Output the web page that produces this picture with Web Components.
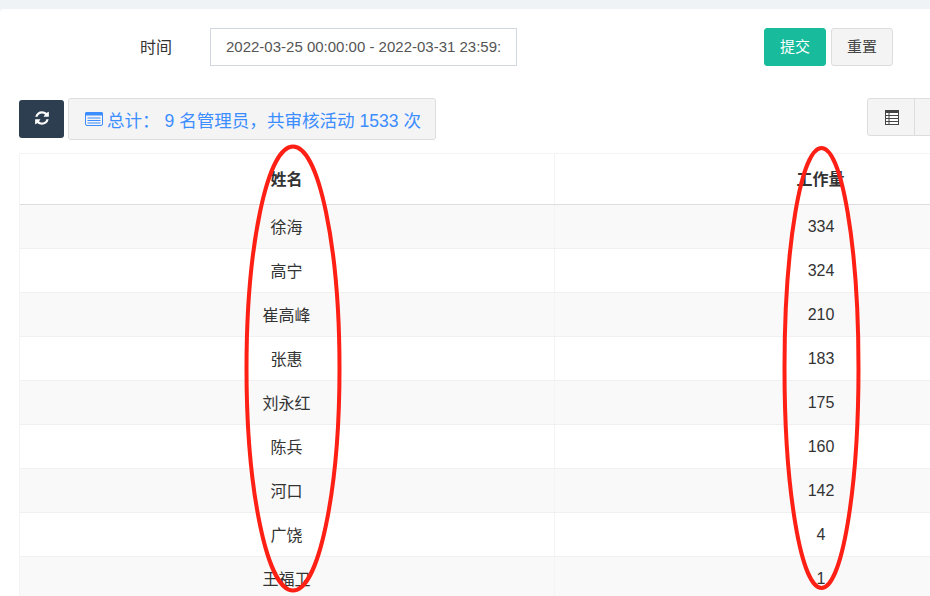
<!DOCTYPE html>
<html lang="zh">
<head>
<meta charset="utf-8">
<title>工作量统计</title>
<style>
    html, body {
        margin: 0;
        height: 596px;
        overflow: hidden;
        background: #f0f3f6;
    }
</style>
</head>
<body>
<admin-page>
    <filter-bar label="时间" value="2022-03-25 00:00:00 - 2022-03-31 23:59:"></filter-bar>
    <table-toolbar summary="总计： 9 名管理员，共审核活动 1533 次"></table-toolbar>
    <stat-table></stat-table>
    <ink-marks></ink-marks>
</admin-page>

<script>
const FONT = '"Liberation Sans", "Noto Sans CJK SC", sans-serif';

class AdminPage extends HTMLElement {
    constructor() {
        super();
        this.shadowDOM = this.attachShadow({ mode: "open" });
        this.shadowDOM.innerHTML = `
            <style>
                :host {
                    display: block;
                    height: 596px;
                    padding-top: 9px;
                    box-sizing: border-box;
                    overflow: hidden;
                    font-family: ${FONT};
                    font-size: 16px;
                    color: #333;
                }

                .panel {
                    position: relative;
                    width: 1108px;
                    height: 587px;
                    padding: 19px 19px 0;
                    box-sizing: border-box;
                    background-color: white;
                    border-radius: 4px 0 0 0;
                }
            </style>

            <div class="panel"><slot></slot></div>
        `;
    }
}

class FilterBar extends HTMLElement {
    constructor() {
        super();
        this.shadowDOM = this.attachShadow({ mode: "open" });
    }

    connectedCallback() {
        this.shadowDOM.innerHTML = `
            <style>
                :host {
                    display: flex;
                    align-items: center;
                    width: 874px;
                    height: 38px;
                }

                .label {
                    width: 191px;
                    padding-right: 38px;
                    padding-bottom: 2px;
                    box-sizing: border-box;
                    text-align: right;
                }

                .input {
                    display: flex;
                    align-items: center;
                    width: 307px;
                    height: 38px;
                    padding: 0 0 2px 15px;
                    box-sizing: border-box;
                    border: 1px solid #d2d6de;
                    font-size: 15px;
                    color: #555;
                    white-space: nowrap;
                }

                .actions {
                    display: flex;
                    gap: 5px;
                    margin-left: auto;
                }

                button {
                    width: 62px;
                    height: 38px;
                    padding: 0 0 3px;
                    border: 1px solid #ddd;
                    border-radius: 3px;
                    background-color: #f4f4f4;
                    font: inherit;
                    font-size: 15px;
                    color: #444;
                }

                button.primary {
                    border-color: #18bc9c;
                    background-color: #18bc9c;
                    color: white;
                }
            </style>

            <div class="label">${this.getAttribute("label")}</div>
            <div class="input">${this.getAttribute("value")}</div>
            <div class="actions">
                <button class="primary">提交</button>
                <button>重置</button>
            </div>
        `;
    }
}

class TableToolbar extends HTMLElement {
    constructor() {
        super();
        this.shadowDOM = this.attachShadow({ mode: "open" });
    }

    connectedCallback() {
        this.shadowDOM.innerHTML = `
            <style>
                :host {
                    display: flex;
                    align-items: flex-start;
                    width: 1069px;
                    height: 42px;
                    margin-top: 32px;
                    margin-bottom: 13px;
                }

                .refresh {
                    display: flex;
                    justify-content: center;
                    align-items: center;
                    width: 45px;
                    height: 38px;
                    margin-top: 2px;
                    padding-bottom: 2px;
                    box-sizing: border-box;
                    border-radius: 3px;
                    background-color: #2c3e50;
                }

                .summary {
                    display: flex;
                    align-items: center;
                    gap: 4px;
                    height: 42px;
                    margin-left: 4px;
                    padding: 0 14px 0 16px;
                    box-sizing: border-box;
                    border: 1px solid #ddd;
                    border-radius: 3px;
                    background-color: #f4f4f4;
                    font-size: 17.56px;
                    color: #3c8dff;
                    white-space: nowrap;
                }

                .tools {
                    display: flex;
                    width: 221px;
                    height: 38px;
                    margin-left: auto;
                    box-sizing: border-box;
                    border: 1px solid #ddd;
                    border-radius: 3px;
                    background-color: #f4f4f4;
                }

                .tools div {
                    display: flex;
                    justify-content: center;
                    align-items: center;
                    width: 47px;
                    padding-left: 1px;
                    box-sizing: border-box;
                    border-right: 1px solid #ddd;
                }
            </style>

            <div class="refresh">
                <svg width="16" height="16" viewBox="0 0 1792 1792" fill="white">
                    <path d="M1639 1056q0 5-1 7-64 268-268 434.5t-478 166.5q-146 0-282.500-55t-243.500-157l-129 129q-19 19-45 19t-45-19-19-45v-448q0-26 19-45t45-19h448q26 0 45 19t19 45-19 45l-137 137q71 66 161 102t187 36q134 0 250-65t186-179q11-17 53-117 8-23 30-23h192q13 0 22.500 9.500t9.500 22.500zm25-800v448q0 26-19 45t-45 19h-448q-26 0-45-19t-19-45 19-45l138-138q-148-137-349-137-134 0-250 65t-186 179q-11 17-53 117-8 23-30 23h-199q-13 0-22.500-9.500t-9.500-22.500v-7q65-268 270-434.500t480-166.500q146 0 284 55.500t245 156.500l130-129q19-19 45-19t45 19 19 45z"/>
                </svg>
            </div>
            <div class="summary">
                <svg width="18" height="14" viewBox="0 0 18 14">
                    <rect x="0.5" y="0.5" width="17" height="13" rx="1.5" fill="#f4f4f4" stroke="#3c8dff"/>
                    <rect x="0" y="0" width="18" height="3.500" rx="1.500" fill="#3c8dff"/>
                    <path d="M2.500 6h13M2.500 8.500h13M2.500 11h13" stroke="#3c8dff"/>
                </svg>
                <span>${this.getAttribute("summary")}</span>
            </div>
            <div class="tools">
                <div>
                    <svg width="14" height="15" viewBox="0 0 14 15">
                        <rect x="0" y="0" width="14" height="15" fill="#444"/>
                        <rect x="1" y="3" width="12" height="11" fill="white"/>
                        <path d="M1 5.500h12M1 8.500h12M1 11.500h12M4 3v11" stroke="#444"/>
                    </svg>
                </div>
            </div>
        `;
    }
}

class StatTable extends HTMLElement {
    constructor() {
        super();
        this.shadowDOM = this.attachShadow({ mode: "open" });
        this.rows = [
            ["徐海", 334], ["高宁", 324], ["崔高峰", 210],
            ["张惠", 183], ["刘永红", 175], ["陈兵", 160],
            ["河口", 142], ["广饶", 4], ["王福卫", 1],
        ];
    }

    connectedCallback() {
        const body = this.rows.map(([name, count]) => `
            <div class="row"><div class="cjk">${name}</div><div>${count}</div></div>
        `).join("");

        this.shadowDOM.innerHTML = `
            <style>
                :host {
                    display: block;
                    width: 1069px;
                    box-sizing: border-box;
                    border-top: 1px solid #f4f4f4;
                    border-left: 1px solid #f4f4f4;
                }

                .row {
                    display: grid;
                    grid-template-columns: 535px 1fr;
                    height: 44px;
                    box-sizing: border-box;
                    border-bottom: 1px solid #f0f0f0;
                }

                .row:nth-child(odd) {
                    background-color: #f9f9f9;
                }

                .row > div {
                    display: flex;
                    justify-content: center;
                    align-items: center;
                    border-right: 1px solid #f4f4f4;
                }

                .row > .cjk {
                    padding-right: 1px;
                    padding-bottom: 2px;
                }

                .head {
                    height: 51px;
                    border-bottom: 1px solid #ddd;
                    font-weight: bold;
                }
            </style>

            <div class="row head"><div class="cjk">姓名</div><div class="cjk">工作量</div></div>
            ${body}
        `;
    }
}

class InkMarks extends HTMLElement {
    constructor() {
        super();
        this.shadowDOM = this.attachShadow({ mode: "open" });
        this.shadowDOM.innerHTML = `
            <style>
                :host {
                    position: absolute;
                    top: -9px;
                    left: 0;
                    width: 930px;
                    height: 596px;
                    pointer-events: none;
                }
            </style>

            <svg width="930" height="596" fill="none" stroke="#ff2015" stroke-width="4">
                <ellipse cx="293" cy="368.500" rx="46.500" ry="222"/>
                <ellipse cx="821.500" cy="368" rx="37" ry="220"/>
            </svg>
        `;
    }
}

customElements.define("admin-page", AdminPage);
customElements.define("filter-bar", FilterBar);
customElements.define("table-toolbar", TableToolbar);
customElements.define("stat-table", StatTable);
customElements.define("ink-marks", InkMarks);
</script>
</body>
</html>
